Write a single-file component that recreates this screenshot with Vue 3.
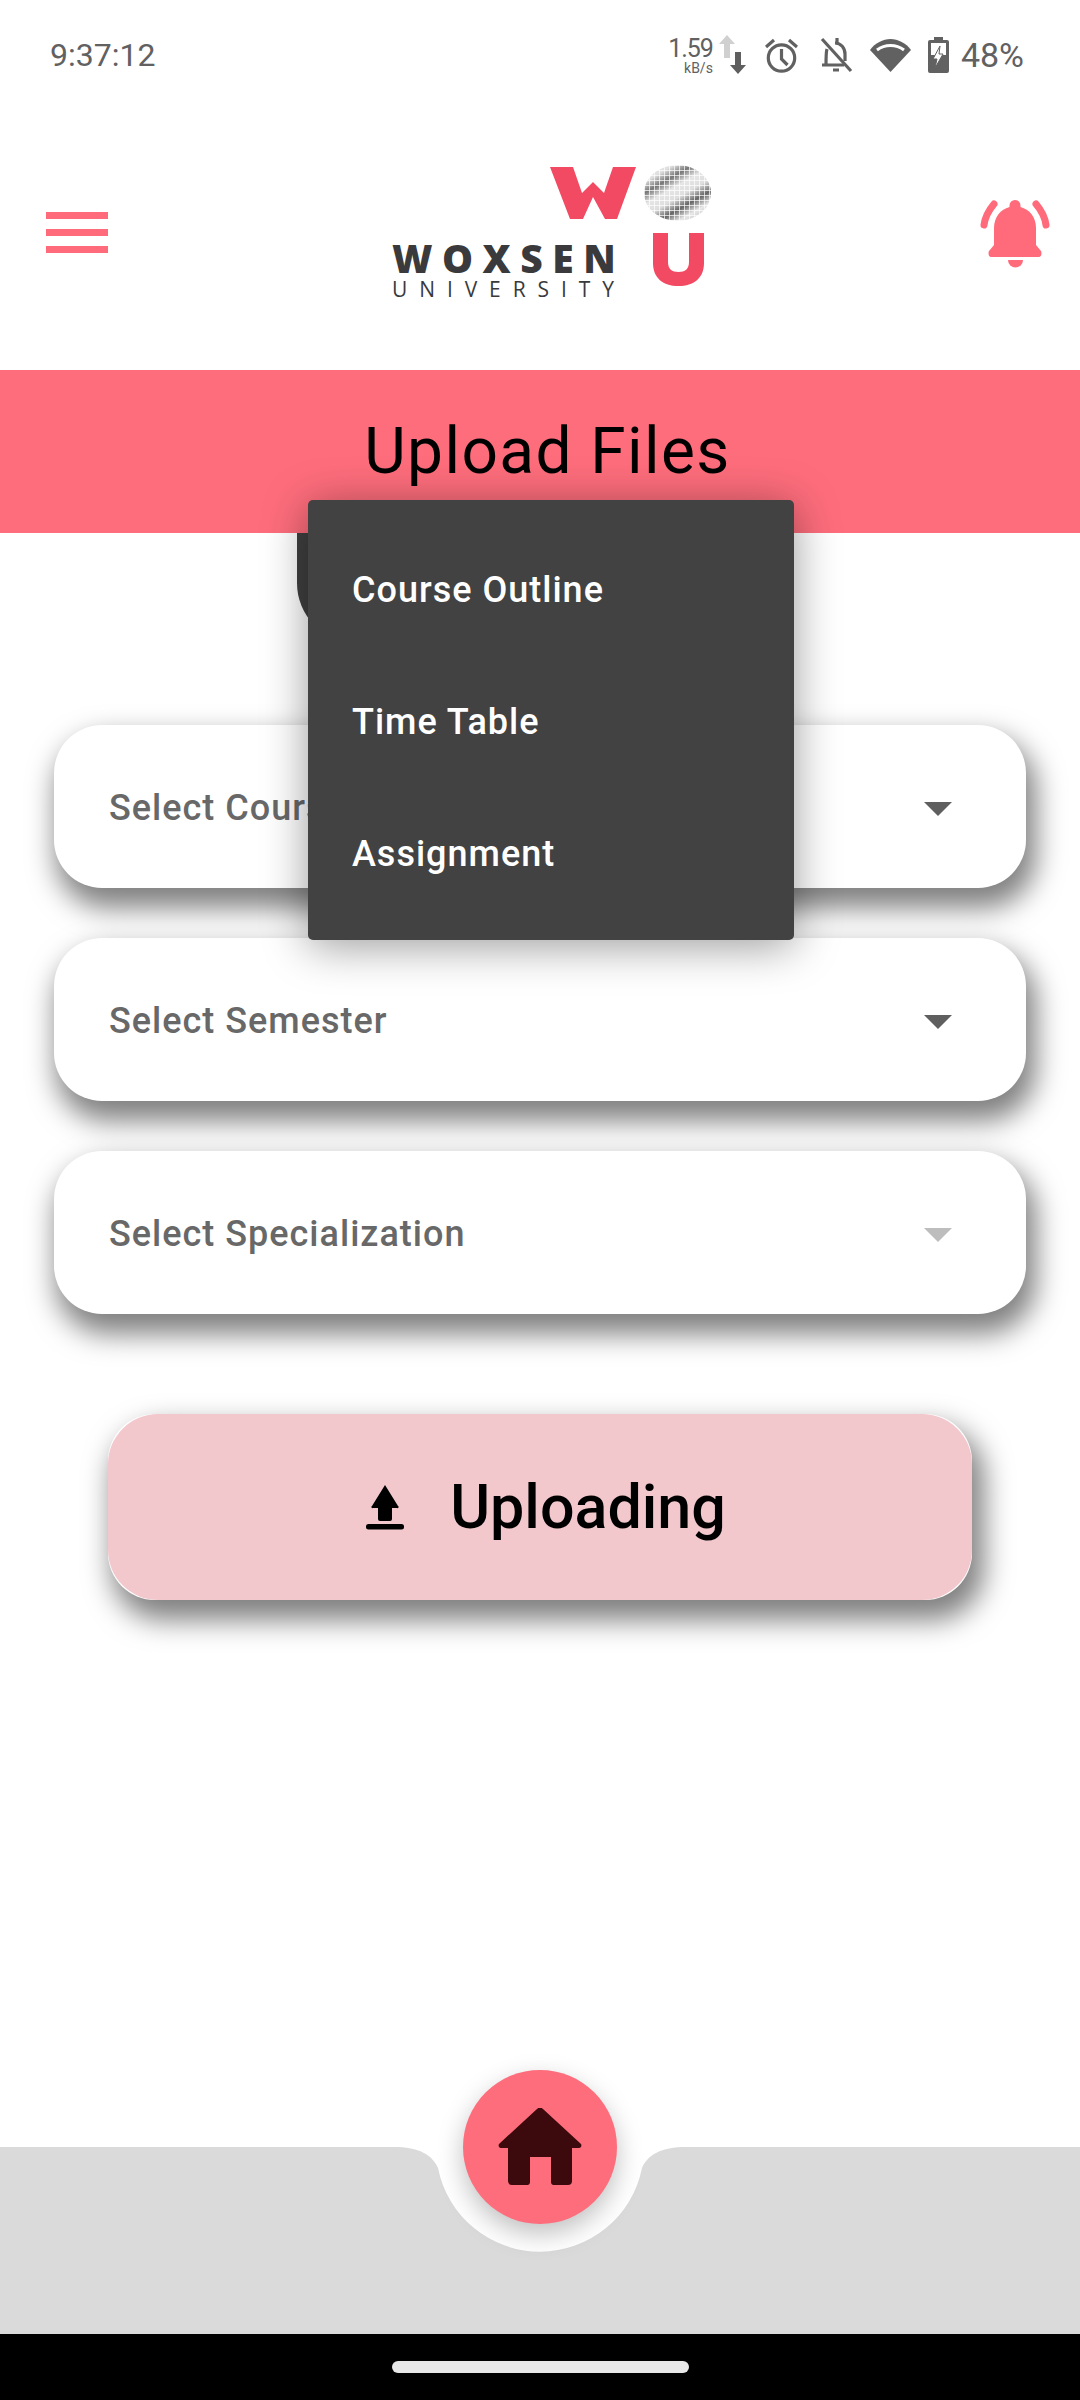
<script setup>
const menuItems = ["Course Outline", "Time Table", "Assignment"]
const selects = [
  { label: "Select Course", arrow: "#5f5f5f" },
  { label: "Select Semester", arrow: "#5f5f5f" },
  { label: "Select Specialization", arrow: "#bdbdbd" }
]
</script>

<template>
  <div class="screen">
    <div class="status">
      <span class="time">9:37:12</span>
      <div class="status-right">
        <div class="speed">
          <span class="speed-num">1.59</span>
          <span class="speed-unit">kB/s</span>
        </div>
        <svg class="arrows" width="27" height="40" viewBox="0 0 27 40">
          <path d="M8 0l8 9h-5v14H5V9H0z" fill="#d0d0d0" />
          <path d="M16 17h6v13h5l-8 9-8-9h5z" fill="#5f5f5f" />
        </svg>
        <svg class="alarm" width="33" height="35" viewBox="0 0 33 35" fill="none" stroke="#616161" stroke-width="3.2">
          <circle cx="16.5" cy="20" r="13.2" />
          <path d="M16.5 11v10l6 6" />
          <path d="M1 9l8-7M32 9l-8-7" />
        </svg>
        <svg class="bell-off" width="33" height="36" viewBox="0 0 33 36" fill="none" stroke="#616161" stroke-width="3.2">
          <path d="M7 12c-1 3-1 6-1 16M15 6c6 0 10 5 10 11v7" />
          <path d="M2 28h22M13 33h6" />
          <path d="M17 1v5" />
          <path d="M2 2l29 32" />
        </svg>
        <svg class="wifi" width="41" height="33" viewBox="0 0 41 33">
          <path d="M0 11C5 4 13 0 20.5 0S36 4 41 11L20.5 33z" fill="#616161" />
          <path d="M7 11c4-3 8.500-4.500 13.500-4.500S30 8 34 11" fill="none" stroke="#fff" stroke-width="3" />
        </svg>
        <svg class="battery" width="21" height="36" viewBox="0 0 21 36">
          <path d="M6 0h9v3h4a2 2 0 0 1 2 2v29a2 2 0 0 1-2 2H2a2 2 0 0 1-2-2V5a2 2 0 0 1 2-2h4z" fill="#616161" />
          <rect x="3" y="6" width="15" height="12" fill="#fff" />
          <path d="M12 9l-7 13h4l-2 9 8-14h-4z" fill="#fff" stroke="#616161" stroke-width="1" />
        </svg>
        <span class="pct">48%</span>
      </div>
    </div>

    <header class="top">
      <div class="burger"><i></i><i></i><i></i></div>
      <div class="logo">
        <div class="logo-row">
          <svg width="86" height="52" viewBox="0 0 86 52">
            <path d="M0 0H23L32 26L43 15L54 26L63 0H86L67 52H55L43 30L33 52H20Z" fill="#f24a62" />
          </svg>
          <div class="logo-o"></div>
        </div>
        <div class="logo-row logo-row-low">
          <div class="logo-words">
            <span class="logo-woxsen">WOXSEN</span>
            <span class="logo-uni">UNIVERSITY</span>
          </div>
          <svg width="51" height="53" viewBox="0 0 51 53">
            <path d="M0 0h15v29c0 7 4 10 10.500 10S36 36 36 29V0h15v30c0 15-10 23-25.500 23S0 45 0 30z" fill="#f24a62" />
          </svg>
        </div>
      </div>
      <svg class="bell" width="72" height="72" viewBox="0 0 72 72">
        <path d="M36 2a5.500 5.500 0 0 1 5.500 5.500V9c9 2.500 15.500 10 15.500 21v17l5 6c1 2 .5 6-2 6H12c-2.500 0-3-4-2-6l5-6V30c0-11 6.500-18.500 15.500-21V7.500A5.500 5.500 0 0 1 36 2z" fill="#ff6b7a" />
        <path d="M29 62h15a7.500 7.500 0 0 1-15 0z" fill="#ff6b7a" />
        <path d="M15 6C10 12 6 19 5 27M57 6c5 6 9 13 10 21" fill="none" stroke="#ff6b7a" stroke-width="7" stroke-linecap="round" />
      </svg>
    </header>

    <div class="banner">Upload Files</div>

    <main class="form">
      <div class="picker"></div>
      <div v-for="s in selects" :key="s.label" class="select">
        <span>{{ s.label }}</span>
        <i class="caret" :style="{ borderTopColor: s.arrow }"></i>
      </div>
      <div class="upload">
        <div class="upload-face">
          <svg width="38" height="46" viewBox="0 0 38 46">
            <path d="M19 1l13 21a1 1 0 0 1-1 2h-5v11a2 2 0 0 1-2 2h-10a2 2 0 0 1-2-2V24H7a1 1 0 0 1-1-2z" fill="#000" />
            <rect x="0" y="40" width="38" height="5.500" rx="2.500" fill="#000" />
          </svg>
          <span>Uploading</span>
        </div>
      </div>

      <div class="menu">
        <div v-for="item in menuItems" :key="item" class="menu-item">{{ item }}</div>
      </div>
    </main>

    <div class="spacer"></div>

    <footer class="nav">
      <svg class="nav-bg" width="1080" height="187" viewBox="0 0 1080 187">
        <path d="M0 0H393C420 0 432 8 438 21A104 104 0 0 0 642 21C648 8 660 0 687 0H1080V187H0Z" fill="#dadada" />
      </svg>
      <div class="home">
        <svg width="84" height="78" viewBox="0 0 84 78">
          <path d="M39 1a4 4 0 0 1 6 0l38 35c1 2 0 4-2 4H74v33a4 4 0 0 1-4 4H55a3 3 0 0 1-2-3V49H32v25a3 3 0 0 1-2 3H14a4 4 0 0 1-4-4V40H3c-2 0-3-2-2-4z" fill="#3c090d" />
        </svg>
      </div>
    </footer>
    <div class="gesture"><i></i></div>
  </div>
</template>

<style scoped>
.screen {
  width: 1080px;
  height: 2400px;
  display: flex;
  flex-direction: column;
  background: #fff;
  font-family: Roboto, sans-serif;
  overflow: hidden;
}

.status {
  height: 110px;
  flex: none;
  display: flex;
  align-items: center;
  justify-content: space-between;
  padding: 0 56px 0 50px;
  color: #616161;
}

.time {
  font-size: 32px;
}

.status-right {
  display: flex;
  align-items: center;
}

.speed {
  display: flex;
  flex-direction: column;
  align-items: flex-end;
  line-height: 1;
}

.speed-num {
  font-size: 25px;
  letter-spacing: -1px;
}

.speed-unit {
  font-size: 14px;
}

.arrows {
  margin: 0 0 0 6px;
}

.alarm {
  margin-left: 19px;
}

.bell-off {
  margin-left: 22px;
}

.wifi {
  margin-left: 17px;
}

.battery {
  margin-left: 17px;
}

.pct {
  font-size: 34px;
  margin-left: 12px;
}

.top {
  height: 260px;
  flex: none;
  display: flex;
  align-items: flex-start;
  padding: 0 29px 0 46px;
}

.burger {
  width: 62px;
  display: flex;
  flex-direction: column;
  gap: 10px;
  margin-top: 102px;
}

.burger i {
  display: block;
  height: 7px;
  background: #ff6b7a;
}

.logo {
  width: 319px;
  margin: 55px 0 0 284px;
}

.logo-row {
  height: 56px;
  display: flex;
  align-items: center;
  justify-content: flex-end;
  gap: 8px;
}

.logo-row-low {
  height: auto;
  margin-top: 12px;
  padding-right: 7px;
  align-items: flex-start;
  justify-content: space-between;
  gap: 0;
}

.logo-words {
  display: flex;
  flex-direction: column;
  gap: 10px;
  padding-top: 11px;
  color: #3a3a3c;
  font-family: "Open Sans", sans-serif;
  white-space: nowrap;
}

.logo-woxsen {
  font-size: 39px;
  line-height: 28px;
  font-weight: 800;
  letter-spacing: 9.5px;
}

.logo-uni {
  font-size: 21px;
  line-height: 15px;
  letter-spacing: 11.9px;
}

.logo-o {
  width: 67px;
  height: 56px;
  border-radius: 50%;
  background:
    repeating-linear-gradient(0deg, rgba(255, 255, 255, 0.7) 0 1px, transparent 1px 5px),
    repeating-linear-gradient(90deg, rgba(255, 255, 255, 0.7) 0 1px, transparent 1px 5px),
    linear-gradient(150deg, #e0e0e0 0 18%, #777 30%, #e6e6e6 42%, #dedede 55%, #666 68%, #e8e8e8 80%, #aaa 100%);
}

.bell {
  margin: 88px 0 0 auto;
}

.banner {
  height: 163px;
  flex: none;
  background: #fe6d7c;
  color: #000;
  font-size: 64px;
  display: flex;
  align-items: center;
  justify-content: center;
  padding-left: 15px;
  box-sizing: border-box;
  letter-spacing: 1.4px;
}

.form {
  flex: none;
  position: relative;
  padding: 0 54px;
  display: flex;
  flex-direction: column;
  gap: 50px;
}

.picker {
  width: 486px;
  height: 110px;
  margin: 0 0 32px 243px;
  background: #404040;
  border-radius: 0 0 60px 60px;
}

.select {
  height: 163px;
  box-sizing: border-box;
  padding: 2px 74px 0 55px;
  display: flex;
  align-items: center;
  justify-content: space-between;
  background: #fff;
  border-radius: 48px;
  box-shadow: 6px 16px 28px 4px rgba(0, 0, 0, 0.5);
  color: #686868;
  font-size: 36px;
  font-weight: 500;
  letter-spacing: 1px;
}

.caret {
  width: 0;
  height: 0;
  border-left: 14px solid transparent;
  border-right: 14px solid transparent;
  border-top: 14px solid #5f5f5f;
  margin-top: 2px;
}

.upload {
  width: 864px;
  height: 186px;
  margin: 50px 0 0 54px;
  background: #fff;
  border-radius: 47px;
  box-shadow: 8px 16px 28px 4px rgba(0, 0, 0, 0.5);
}

.upload-face {
  height: 100%;
  box-sizing: border-box;
  padding-left: 12px;
  display: flex;
  align-items: center;
  justify-content: center;
  gap: 46px;
  background: #f2c8cd;
  border-radius: 50px;
  color: #000;
  font-size: 61px;
  font-weight: 500;
}

.menu {
  position: absolute;
  left: 308px;
  top: -33px;
  width: 486px;
  height: 440px;
  box-sizing: border-box;
  padding: 24px 0 20px;
  background: #424242;
  border-radius: 5px;
  box-shadow: 0 6px 45px rgba(0, 0, 0, 0.4);
  color: #fff;
  font-size: 36px;
  font-weight: 500;
  letter-spacing: 1px;
}

.menu-item {
  height: 132px;
  display: flex;
  align-items: center;
  padding-left: 44px;
}

.spacer {
  flex: 1;
}

.nav {
  height: 187px;
  flex: none;
  position: relative;
}

.nav-bg {
  display: block;
}

.home {
  position: absolute;
  left: 463px;
  top: -77px;
  width: 154px;
  height: 154px;
  border-radius: 50%;
  background: #fe6d7c;
  box-shadow: 0 10px 26px rgba(0, 0, 0, 0.25);
  display: flex;
  align-items: center;
  justify-content: center;
}

.gesture {
  height: 66px;
  flex: none;
  background: #000;
  display: flex;
  justify-content: center;
  padding-top: 27px;
  box-sizing: border-box;
}

.gesture i {
  display: block;
  width: 297px;
  height: 12px;
  border-radius: 6px;
  background: #e8e8e8;
}
</style>

<style>
html, body { margin: 0; background: #fff; }
</style>
